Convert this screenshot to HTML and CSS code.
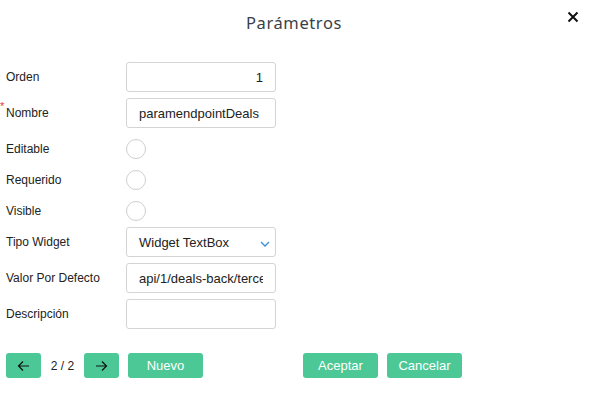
FILE: index.html
```html
<!DOCTYPE html>
<html lang="es">
<head>
<meta charset="utf-8">
<title>Parámetros</title>
<link rel="stylesheet" href="styles.css">
</head>
<body>
<div class="dialog">
  <header class="head">
    <span></span>
    <h1 class="title">Parámetros</h1>
    <button class="close" aria-label="Cerrar">
      <svg width="12" height="12" viewBox="0 0 12 12"><path d="M1.5 1.5 L10.5 10.5 M10.5 1.5 L1.5 10.5" stroke="#111" stroke-width="2" fill="none"/></svg>
    </button>
  </header>
  <div class="form">
    <div class="row"><label class="lbl">Orden</label><div class="input num">1</div></div>
    <div class="row"><label class="lbl req">Nombre</label><div class="input">paramendpointDeals</div></div>
    <div class="row short"><label class="lbl">Editable</label><span class="radio"></span></div>
    <div class="row short"><label class="lbl">Requerido</label><span class="radio"></span></div>
    <div class="row short"><label class="lbl">Visible</label><span class="radio"></span></div>
    <div class="row"><label class="lbl">Tipo Widget</label><div class="input select"><span>Widget TextBox</span>
      <svg class="chev" width="10" height="6" viewBox="0 0 10 6"><path d="M1 1 L5 5 L9 1" stroke="#3b8fd6" stroke-width="1.3" fill="none"/></svg></div></div>
    <div class="row"><label class="lbl">Valor Por Defecto</label><div class="input"><span class="clip">api/1/deals-back/terceros</span></div></div>
    <div class="row"><label class="lbl">Descripción</label><div class="input"></div></div>
  </div>
  <footer class="foot">
    <button class="btn arrow"><svg width="13" height="12" viewBox="0 0 13 12"><path d="M12 6 H1.5 M6 1.5 L1.5 6 L6 10.5" stroke="#111" stroke-width="1.2" fill="none"/></svg></button>
    <span class="pager">2 / 2</span>
    <button class="btn arrow"><svg width="13" height="12" viewBox="0 0 13 12"><path d="M1 6 H11.5 M7 1.5 L11.5 6 L7 10.5" stroke="#111" stroke-width="1.2" fill="none"/></svg></button>
    <button class="btn wide">Nuevo</button>
    <button class="btn wide accept">Aceptar</button>
    <button class="btn wide">Cancelar</button>
  </footer>
</div>
</body>
</html>
```
FILE: styles.css
```css
* { box-sizing: border-box; }
body {
  margin: 0;
  background: #fff;
  font-family: "Liberation Sans", Arial, sans-serif;
  color: #222;
}
.dialog { width: 590px; height: 402px; }
.head {
  display: grid;
  grid-template-columns: 1fr auto 1fr;
  align-items: center;
  height: 44px;
  padding: 0 11px 0 0;
}
.title {
  margin: 0 0 0 9px;
  font-family: "Noto Sans", sans-serif;
  font-weight: 400;
  font-size: 16.5px;
  color: #3a3f47;
  letter-spacing: 0.6px;
}
.close {
  justify-self: end;
  align-self: start;
  margin-top: 11px;
  border: 0;
  background: none;
  padding: 0;
  width: 12px;
  height: 12px;
  display: flex;
}
.form {
  padding: 18px 0 0 6px;
  display: flex;
  flex-direction: column;
  gap: 6px;
}
.row {
  display: grid;
  grid-template-columns: 120px 150px;
  align-items: center;
  height: 30px;
}
.row.short { height: 25px; align-items: end; }
.row.short .lbl { align-self: end; padding-bottom: 3px; }
.lbl {
  font-size: 12px;
  color: #222;
  position: relative;
  margin-top: -1px;
}
.req::before {
  content: "*";
  position: absolute;
  left: -6px;
  top: -6px;
  color: #e53935;
  font-size: 11px;
}
.input {
  height: 30px;
  border: 1px solid #d4d4d4;
  border-radius: 3px;
  font-size: 13px;
  color: #222;
  padding: 0 12px;
  display: flex;
  align-items: center;
  white-space: nowrap;
  overflow: hidden;
}
.clip { overflow: hidden; display: block; }
.input.num { justify-content: flex-end; }
.input.select { justify-content: space-between; padding-right: 5px; }
.chev { margin-top: 3px; }
.radio {
  width: 20px;
  height: 20px;
  border: 1px solid #cfcfcf;
  border-radius: 50%;
}
.foot {
  display: flex;
  align-items: center;
  padding: 24px 0 0 6px;
}
.btn {
  height: 25px;
  border: 0;
  border-radius: 3px;
  background: #4cc896;
  color: #fff;
  font-family: "Liberation Sans", Arial, sans-serif;
  font-size: 13px;
  padding: 0;
  display: flex;
  align-items: center;
  justify-content: center;
}
.btn.arrow { width: 35px; }
.btn.wide { width: 75px; margin-left: 9px; }
.btn.wide.accept { margin-left: 100px; }
.pager {
  font-size: 12px;
  color: #222;
  width: 43px;
  text-align: center;
}
```
